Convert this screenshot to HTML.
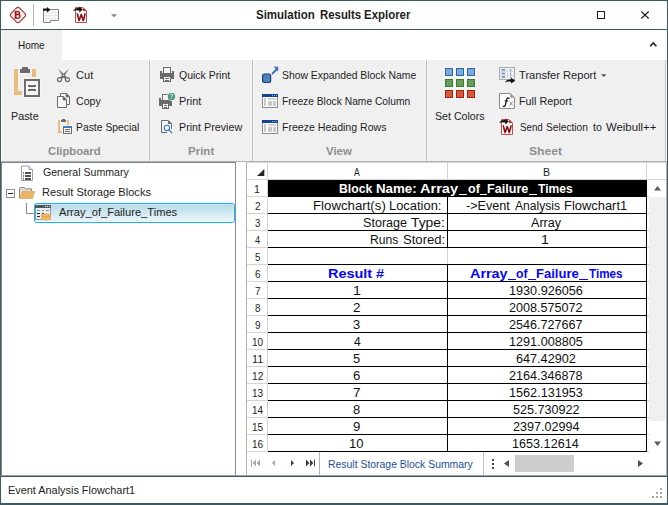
<!DOCTYPE html>
<html><head><meta charset="utf-8">
<style>
*{box-sizing:border-box;margin:0;padding:0}
html,body{width:668px;height:505px;overflow:hidden;background:#fff}
body{font-family:"Liberation Sans",sans-serif;position:relative}
.a{position:absolute}
.t{position:absolute;white-space:nowrap;line-height:14px;transform-origin:0 50%;display:block}
svg{position:absolute;overflow:visible}
</style></head><body>
<div class="a" style="left:0px;top:0px;width:668px;height:505px;background:#fff;"></div>
<span class="t" style="left:256.47px;top:8.14px;font-size:12px;font-weight:bold;color:#1e1e1e;transform:scaleX(0.9577)">Simulation</span>
<span class="t" style="left:319.64px;top:8.14px;font-size:12px;font-weight:bold;color:#1e1e1e;transform:scaleX(0.9486)">Results</span>
<span class="t" style="left:364.14px;top:8.14px;font-size:12px;font-weight:bold;color:#1e1e1e;transform:scaleX(0.9535)">Explorer</span>
<div class="a" style="left:0px;top:29px;width:668px;height:1px;background:#3d5a5e;"></div>
<div class="a" style="left:2px;top:30px;width:60px;height:30px;background:#f0f0f0;"></div>
<span class="t" style="left:17.79px;top:38.19px;font-size:11px;color:#1a1a1a;transform:scaleX(0.9082)">Home</span>
<div class="a" style="left:1px;top:60px;width:666px;height:101px;background:#fafafa;"></div>
<div class="a" style="left:2px;top:60px;width:663px;height:101px;background:#f0f0f0;"></div>
<div class="a" style="left:665px;top:60px;width:1px;height:101px;background:#c6c6c6;"></div>
<div class="a" style="left:148px;top:60px;width:3px;height:101px;background:#f5f5f5;"></div>
<div class="a" style="left:149px;top:60px;width:1px;height:101px;background:#bdbdbd;"></div>
<div class="a" style="left:251px;top:60px;width:3px;height:101px;background:#f5f5f5;"></div>
<div class="a" style="left:252px;top:60px;width:1px;height:101px;background:#bdbdbd;"></div>
<div class="a" style="left:425px;top:60px;width:3px;height:101px;background:#f5f5f5;"></div>
<div class="a" style="left:426px;top:60px;width:1px;height:101px;background:#bdbdbd;"></div>
<div class="a" style="left:1px;top:161px;width:666px;height:1px;background:#b2b2b2;"></div>
<span class="t" style="left:10.72px;top:108.79px;font-size:11px;color:#1e1e1e;transform:scaleX(0.9826)">Paste</span>
<span class="t" style="left:76.15px;top:68.39px;font-size:11px;color:#1e1e1e;transform:scaleX(1.0061)">Cut</span>
<span class="t" style="left:76.17px;top:94.39px;font-size:11px;color:#1e1e1e;transform:scaleX(0.9638)">Copy</span>
<span class="t" style="left:76.26px;top:120.19px;font-size:11px;color:#1e1e1e;transform:scaleX(0.9430)">Paste Special</span>
<span class="t" style="left:179.11px;top:68.39px;font-size:11px;color:#1e1e1e;transform:scaleX(0.9511)">Quick Print</span>
<span class="t" style="left:179.12px;top:94.39px;font-size:11px;color:#1e1e1e;transform:scaleX(0.9882)">Print</span>
<span class="t" style="left:179.13px;top:120.19px;font-size:11px;color:#1e1e1e;transform:scaleX(0.9757)">Print Preview</span>
<span class="t" style="left:282.43px;top:68.39px;font-size:11px;color:#1e1e1e;transform:scaleX(0.9422)">Show Expanded Block Name</span>
<span class="t" style="left:282.07px;top:94.39px;font-size:11px;color:#1e1e1e;transform:scaleX(0.9327)">Freeze Block Name Column</span>
<span class="t" style="left:282.05px;top:120.19px;font-size:11px;color:#1e1e1e;transform:scaleX(0.9596)">Freeze Heading Rows</span>
<span class="t" style="left:435.42px;top:108.79px;font-size:11px;color:#1e1e1e;transform:scaleX(0.9650)">Set Colors</span>
<span class="t" style="left:519.26px;top:68.39px;font-size:11px;color:#1e1e1e;transform:scaleX(1.0103)">Transfer Report</span>
<span class="t" style="left:519.03px;top:94.39px;font-size:11px;color:#1e1e1e;transform:scaleX(0.9824)">Full Report</span>
<span class="t" style="left:519.86px;top:120.19px;font-size:11px;color:#1e1e1e;transform:scaleX(0.8857)">Send</span>
<span class="t" style="left:546.34px;top:120.19px;font-size:11px;color:#1e1e1e;transform:scaleX(0.9263)">Selection</span>
<span class="t" style="left:592.75px;top:120.19px;font-size:11px;color:#1e1e1e;transform:scaleX(0.9577)">to</span>
<span class="t" style="left:605.85px;top:120.19px;font-size:11px;color:#1e1e1e;transform:scaleX(1.0324)">Weibull++</span>
<span class="t" style="left:48.25px;top:143.59px;font-size:11px;font-weight:bold;color:#8e8e8e;transform:scaleX(1.0245)">Clipboard</span>
<span class="t" style="left:187.73px;top:143.59px;font-size:11px;font-weight:bold;color:#8e8e8e;transform:scaleX(1.0460)">Print</span>
<span class="t" style="left:325.54px;top:143.59px;font-size:11px;font-weight:bold;color:#8e8e8e;transform:scaleX(1.0391)">View</span>
<span class="t" style="left:528.85px;top:143.59px;font-size:11px;font-weight:bold;color:#8e8e8e;transform:scaleX(1.1045)">Sheet</span>
<div class="a" style="left:1px;top:162px;width:235px;height:314px;background:#fff;border:1px solid #858a94;border-top-color:#7c848e"></div>
<div class="a" style="left:236px;top:162px;width:10px;height:314px;background:#fff;"></div>
<div class="a" style="left:246px;top:162px;width:421px;height:314px;background:#fff;border:1px solid #b4b4b4;border-top-color:#d6d6d6"></div>
<span class="t" style="left:42.57px;top:165.19px;font-size:11px;color:#1e1e1e;transform:scaleX(0.9607)">General Summary</span>
<span class="t" style="left:42.00px;top:185.19px;font-size:11px;color:#1e1e1e;transform:scaleX(1.0071)">Result Storage Blocks</span>
<div class="a" style="left:34px;top:203px;width:201px;height:20px;background:linear-gradient(#b4dae8,#ecf6fa);border:1px solid #1ab2f6;border-radius:2.5px;box-shadow:inset 0 0 0 1px rgba(255,255,255,0.35)"></div>
<span class="t" style="left:58.88px;top:205.19px;font-size:11px;color:#1e1e1e;transform:scaleX(1.0098)">Array_of_Failure_Times</span>
<div class="a" style="left:0px;top:475px;width:668px;height:1px;background:#9aa4a8;"></div>
<div class="a" style="left:0px;top:476px;width:668px;height:1px;background:#3d5a5e;"></div>
<div class="a" style="left:1px;top:477px;width:666px;height:26px;background:#fff;"></div>
<span class="t" style="left:8.02px;top:483.19px;font-size:11px;color:#1e1e1e;transform:scaleX(0.9900)">Event Analysis Flowchart1</span>
<div class="a" style="left:247px;top:179px;width:419px;height:1px;background:#d4d4d4;"></div>
<div class="a" style="left:267px;top:163px;width:1px;height:289px;background:#d4d4d4;"></div>
<div class="a" style="left:447px;top:163px;width:1px;height:17px;background:#d4d4d4;"></div>
<div class="a" style="left:646px;top:163px;width:1px;height:17px;background:#d4d4d4;"></div>
<span class="t" style="left:354.39px;top:165.39px;font-size:11px;color:#1e1e1e;transform:scaleX(0.7795)">A</span>
<span class="t" style="left:542.54px;top:165.39px;font-size:11px;color:#1e1e1e;transform:scaleX(0.9702)">B</span>
<div class="a" style="left:247px;top:196px;width:21px;height:1px;background:#d4d4d4;"></div>
<span class="t" style="left:254.40px;top:181.99px;font-size:11px;color:#1e1e1e;transform:scaleX(0.9652)">1</span>
<div class="a" style="left:247px;top:213px;width:21px;height:1px;background:#d4d4d4;"></div>
<span class="t" style="left:254.70px;top:198.99px;font-size:11px;color:#1e1e1e;transform:scaleX(0.9143)">2</span>
<div class="a" style="left:247px;top:230px;width:21px;height:1px;background:#d4d4d4;"></div>
<span class="t" style="left:254.84px;top:215.99px;font-size:11px;color:#1e1e1e;transform:scaleX(0.8788)">3</span>
<div class="a" style="left:247px;top:247px;width:21px;height:1px;background:#d4d4d4;"></div>
<span class="t" style="left:254.99px;top:232.99px;font-size:11px;color:#1e1e1e;transform:scaleX(0.8293)">4</span>
<div class="a" style="left:247px;top:264px;width:21px;height:1px;background:#d4d4d4;"></div>
<span class="t" style="left:254.81px;top:249.99px;font-size:11px;color:#1e1e1e;transform:scaleX(0.8814)">5</span>
<div class="a" style="left:247px;top:281px;width:21px;height:1px;background:#d4d4d4;"></div>
<span class="t" style="left:254.71px;top:266.99px;font-size:11px;color:#1e1e1e;transform:scaleX(0.9031)">6</span>
<div class="a" style="left:247px;top:298px;width:21px;height:1px;background:#d4d4d4;"></div>
<span class="t" style="left:254.68px;top:283.99px;font-size:11px;color:#1e1e1e;transform:scaleX(0.9171)">7</span>
<div class="a" style="left:247px;top:315px;width:21px;height:1px;background:#d4d4d4;"></div>
<span class="t" style="left:254.78px;top:300.99px;font-size:11px;color:#1e1e1e;transform:scaleX(0.8894)">8</span>
<div class="a" style="left:247px;top:332px;width:21px;height:1px;background:#d4d4d4;"></div>
<span class="t" style="left:254.73px;top:317.99px;font-size:11px;color:#1e1e1e;transform:scaleX(0.9031)">9</span>
<div class="a" style="left:247px;top:349px;width:21px;height:1px;background:#d4d4d4;"></div>
<span class="t" style="left:251.75px;top:334.99px;font-size:11px;color:#1e1e1e;transform:scaleX(0.9091)">10</span>
<div class="a" style="left:247px;top:366px;width:21px;height:1px;background:#d4d4d4;"></div>
<span class="t" style="left:251.68px;top:351.99px;font-size:11px;color:#1e1e1e;transform:scaleX(0.9938)">11</span>
<div class="a" style="left:247px;top:383px;width:21px;height:1px;background:#d4d4d4;"></div>
<span class="t" style="left:251.74px;top:368.99px;font-size:11px;color:#1e1e1e;transform:scaleX(0.9195)">12</span>
<div class="a" style="left:247px;top:400px;width:21px;height:1px;background:#d4d4d4;"></div>
<span class="t" style="left:251.74px;top:385.99px;font-size:11px;color:#1e1e1e;transform:scaleX(0.9143)">13</span>
<div class="a" style="left:247px;top:417px;width:21px;height:1px;background:#d4d4d4;"></div>
<span class="t" style="left:251.75px;top:402.99px;font-size:11px;color:#1e1e1e;transform:scaleX(0.9014)">14</span>
<div class="a" style="left:247px;top:434px;width:21px;height:1px;background:#d4d4d4;"></div>
<span class="t" style="left:251.74px;top:419.99px;font-size:11px;color:#1e1e1e;transform:scaleX(0.9130)">15</span>
<div class="a" style="left:247px;top:451px;width:21px;height:1px;background:#d4d4d4;"></div>
<span class="t" style="left:251.74px;top:436.99px;font-size:11px;color:#1e1e1e;transform:scaleX(0.9143)">16</span>
<div class="a" style="left:268px;top:180px;width:379px;height:17px;background:#000;"></div>
<span class="t" style="left:338.59px;top:181.97px;font-size:12.5px;font-weight:bold;color:#fff;transform:scaleX(0.9749)">Block</span>
<span class="t" style="left:375.52px;top:181.97px;font-size:12.5px;font-weight:bold;color:#fff;transform:scaleX(1.0639)">Name:</span>
<span class="t" style="left:420.35px;top:181.97px;font-size:12.5px;font-weight:bold;color:#fff;transform:scaleX(1.1642)">Array</span>
<span class="t" style="left:467.61px;top:181.97px;font-size:12.5px;font-weight:bold;color:#fff;transform:scaleX(1.0050)">of</span>
<span class="t" style="left:487.46px;top:181.97px;font-size:12.5px;font-weight:bold;color:#fff;transform:scaleX(1.0092)">Failure</span>
<span class="t" style="left:538.08px;top:181.97px;font-size:12.5px;font-weight:bold;color:#fff;transform:scaleX(0.9637)">Times</span>
<div class="a" style="left:459.2px;top:193.7px;width:8.0px;height:1.5px;background:#fff;"></div>
<div class="a" style="left:479.9px;top:193.7px;width:7.5px;height:1.5px;background:#fff;"></div>
<div class="a" style="left:528.8px;top:193.7px;width:8.5px;height:1.5px;background:#fff;"></div>
<div class="a" style="left:268px;top:213px;width:379px;height:1px;background:#000;"></div>
<div class="a" style="left:268px;top:230px;width:379px;height:1px;background:#000;"></div>
<div class="a" style="left:268px;top:247px;width:379px;height:1px;background:#000;"></div>
<div class="a" style="left:268px;top:264px;width:379px;height:1px;background:#000;"></div>
<div class="a" style="left:268px;top:281px;width:379px;height:1px;background:#000;"></div>
<div class="a" style="left:268px;top:298px;width:379px;height:1px;background:#000;"></div>
<div class="a" style="left:268px;top:315px;width:379px;height:1px;background:#000;"></div>
<div class="a" style="left:268px;top:332px;width:379px;height:1px;background:#000;"></div>
<div class="a" style="left:268px;top:349px;width:379px;height:1px;background:#000;"></div>
<div class="a" style="left:268px;top:366px;width:379px;height:1px;background:#000;"></div>
<div class="a" style="left:268px;top:383px;width:379px;height:1px;background:#000;"></div>
<div class="a" style="left:268px;top:400px;width:379px;height:1px;background:#000;"></div>
<div class="a" style="left:268px;top:417px;width:379px;height:1px;background:#000;"></div>
<div class="a" style="left:268px;top:434px;width:379px;height:1px;background:#000;"></div>
<div class="a" style="left:268px;top:451px;width:379px;height:1px;background:#000;"></div>
<div class="a" style="left:447px;top:197px;width:1px;height:51px;background:#000;"></div>
<div class="a" style="left:447px;top:264px;width:1px;height:188px;background:#000;"></div>
<div class="a" style="left:447px;top:248px;width:1px;height:16px;background:#d4d4d4;"></div>
<div class="a" style="left:646px;top:180px;width:1px;height:272px;background:#000;"></div>
<span class="t" style="left:313.22px;top:198.97px;font-size:12.5px;color:#111;transform:scaleX(1.0587)">Flowchart(s)</span>
<span class="t" style="left:389.05px;top:198.97px;font-size:12.5px;color:#111;transform:scaleX(1.0331)">Location:</span>
<span class="t" style="left:363.23px;top:215.97px;font-size:12.5px;color:#111;transform:scaleX(1.0077)">Storage</span>
<span class="t" style="left:411.31px;top:215.97px;font-size:12.5px;color:#111;transform:scaleX(1.1072)">Type:</span>
<span class="t" style="left:370.22px;top:232.97px;font-size:12.5px;color:#111;transform:scaleX(0.9663)">Runs</span>
<span class="t" style="left:402.91px;top:232.97px;font-size:12.5px;color:#111;transform:scaleX(1.0464)">Stored:</span>
<span class="t" style="left:465.65px;top:198.97px;font-size:12.5px;color:#111;transform:scaleX(1.0094)">-&gt;Event</span>
<span class="t" style="left:514.58px;top:198.97px;font-size:12.5px;color:#111;transform:scaleX(0.9676)">Analysis</span>
<span class="t" style="left:563.65px;top:198.97px;font-size:12.5px;color:#111;transform:scaleX(1.0333)">Flowchart1</span>
<span class="t" style="left:530.78px;top:215.97px;font-size:12.5px;color:#111;transform:scaleX(1.0058)">Array</span>
<span class="t" style="left:541.39px;top:232.97px;font-size:12.5px;color:#111;transform:scaleX(1.1283)">1</span>
<span class="t" style="left:328.45px;top:266.97px;font-size:12.5px;font-weight:bold;color:#0505ff;transform:scaleX(1.1510)">Result #</span>
<span class="t" style="left:469.56px;top:266.97px;font-size:12.5px;font-weight:bold;color:#0505ff;transform:scaleX(1.1518)">Array</span>
<span class="t" style="left:516.13px;top:266.97px;font-size:12.5px;font-weight:bold;color:#0505ff;transform:scaleX(0.9785)">of</span>
<span class="t" style="left:536.14px;top:266.97px;font-size:12.5px;font-weight:bold;color:#0505ff;transform:scaleX(1.0419)">Failure</span>
<span class="t" style="left:588.58px;top:266.97px;font-size:12.5px;font-weight:bold;color:#0505ff;transform:scaleX(0.9325)">Times</span>
<div class="a" style="left:507.7px;top:278.7px;width:8.099999999999966px;height:1.5px;background:#0505ff;"></div>
<div class="a" style="left:528.2px;top:278.7px;width:8.0px;height:1.5px;background:#0505ff;"></div>
<div class="a" style="left:578.9px;top:278.7px;width:9.0px;height:1.5px;background:#0505ff;"></div>
<span class="t" style="left:508.88px;top:283.97px;font-size:12.5px;color:#111;transform:scaleX(1.0117)">1930.926056</span>
<span class="t" style="left:352.87px;top:283.97px;font-size:12.5px;color:#111;transform:scaleX(1.1339)">1</span>
<span class="t" style="left:509.19px;top:300.97px;font-size:12.5px;color:#111;transform:scaleX(1.0084)">2008.575072</span>
<span class="t" style="left:353.26px;top:300.97px;font-size:12.5px;color:#111;transform:scaleX(1.0748)">2</span>
<span class="t" style="left:509.19px;top:317.97px;font-size:12.5px;color:#111;transform:scaleX(1.0084)">2546.727667</span>
<span class="t" style="left:353.45px;top:317.97px;font-size:12.5px;color:#111;transform:scaleX(1.0324)">3</span>
<span class="t" style="left:508.88px;top:334.97px;font-size:12.5px;color:#111;transform:scaleX(1.0112)">1291.008805</span>
<span class="t" style="left:353.66px;top:334.97px;font-size:12.5px;color:#111;transform:scaleX(0.9711)">4</span>
<span class="t" style="left:516.12px;top:351.97px;font-size:12.5px;color:#111;transform:scaleX(1.0112)">647.42902</span>
<span class="t" style="left:353.42px;top:351.97px;font-size:12.5px;color:#111;transform:scaleX(1.0324)">5</span>
<span class="t" style="left:509.20px;top:368.97px;font-size:12.5px;color:#111;transform:scaleX(1.0070)">2164.346878</span>
<span class="t" style="left:353.27px;top:368.97px;font-size:12.5px;color:#111;transform:scaleX(1.0603)">6</span>
<span class="t" style="left:508.88px;top:385.97px;font-size:12.5px;color:#111;transform:scaleX(1.0117)">1562.131953</span>
<span class="t" style="left:353.24px;top:385.97px;font-size:12.5px;color:#111;transform:scaleX(1.0778)">7</span>
<span class="t" style="left:512.79px;top:402.97px;font-size:12.5px;color:#111;transform:scaleX(1.0077)">525.730922</span>
<span class="t" style="left:353.38px;top:402.97px;font-size:12.5px;color:#111;transform:scaleX(1.0406)">8</span>
<span class="t" style="left:512.66px;top:419.97px;font-size:12.5px;color:#111;transform:scaleX(1.0055)">2397.02994</span>
<span class="t" style="left:353.32px;top:419.97px;font-size:12.5px;color:#111;transform:scaleX(1.0575)">9</span>
<span class="t" style="left:512.34px;top:436.97px;font-size:12.5px;color:#111;transform:scaleX(1.0103)">1653.12614</span>
<span class="t" style="left:349.49px;top:436.97px;font-size:12.5px;color:#111;transform:scaleX(1.0461)">10</span>
<div class="a" style="left:649px;top:197px;width:17px;height:224px;background:#f0f0f0;"></div>
<svg style="left:653px;top:185px" width="9" height="6"><path d="M1 5.4 L4.5 1 L8 5.4 Z" fill="#5a5a5a"/></svg>
<svg style="left:653px;top:441px" width="9" height="6"><path d="M1 0.5 L4.5 5 L8 0.5 Z" fill="#5a5a5a"/></svg>
<div class="a" style="left:647px;top:196px;width:2px;height:1px;background:#cfcfcf;"></div>
<div class="a" style="left:647px;top:213px;width:2px;height:1px;background:#cfcfcf;"></div>
<div class="a" style="left:647px;top:230px;width:2px;height:1px;background:#cfcfcf;"></div>
<div class="a" style="left:647px;top:247px;width:2px;height:1px;background:#cfcfcf;"></div>
<div class="a" style="left:647px;top:264px;width:2px;height:1px;background:#cfcfcf;"></div>
<div class="a" style="left:647px;top:281px;width:2px;height:1px;background:#cfcfcf;"></div>
<div class="a" style="left:647px;top:298px;width:2px;height:1px;background:#cfcfcf;"></div>
<div class="a" style="left:647px;top:315px;width:2px;height:1px;background:#cfcfcf;"></div>
<div class="a" style="left:647px;top:332px;width:2px;height:1px;background:#cfcfcf;"></div>
<div class="a" style="left:647px;top:349px;width:2px;height:1px;background:#cfcfcf;"></div>
<div class="a" style="left:647px;top:366px;width:2px;height:1px;background:#cfcfcf;"></div>
<div class="a" style="left:647px;top:383px;width:2px;height:1px;background:#cfcfcf;"></div>
<div class="a" style="left:647px;top:400px;width:2px;height:1px;background:#cfcfcf;"></div>
<div class="a" style="left:647px;top:417px;width:2px;height:1px;background:#cfcfcf;"></div>
<div class="a" style="left:647px;top:434px;width:2px;height:1px;background:#cfcfcf;"></div>
<div class="a" style="left:647px;top:451px;width:2px;height:1px;background:#cfcfcf;"></div>
<div class="a" style="left:247px;top:452px;width:419px;height:23px;background:#fff;"></div>
<div class="a" style="left:319px;top:452px;width:1px;height:23px;background:#b2b2b2;"></div>
<div class="a" style="left:483px;top:452px;width:1px;height:23px;background:#c4c4c4;"></div>
<span class="t" style="left:328.06px;top:456.89px;font-size:11px;color:#1f4e9a;transform:scaleX(0.9472)">Result Storage Block Summary</span>
<div class="a" style="left:515px;top:455px;width:59px;height:17px;background:#cdcdcd;"></div>
<svg style="left:503px;top:459px" width="7" height="9"><path d="M6 1 L1 4.5 L6 8 Z" fill="#505050"/></svg>
<svg style="left:637px;top:459px" width="7" height="9"><path d="M1 1 L6 4.5 L1 8 Z" fill="#505050"/></svg>
<div class="a" style="left:492px;top:459px;width:2px;height:2px;background:#444;"></div>
<div class="a" style="left:492px;top:463px;width:2px;height:2px;background:#444;"></div>
<div class="a" style="left:492px;top:467px;width:2px;height:2px;background:#444;"></div>
<svg style="left:250px;top:459px" width="70" height="8"><g fill="#a6a6a6"><rect x="1" y="0.5" width="1" height="7"/><path d="M6 0.5 L2.6 4 L6 7.5Z"/><path d="M10 0.5 L6.6 4 L10 7.5Z"/><path d="M25 1 L22 4 L25 7Z"/></g><g fill="#3c3c3c"><path d="M41 1 L44 4 L41 7Z"/><path d="M56 0.5 L59.4 4 L56 7.5Z"/><path d="M60 0.5 L63.4 4 L60 7.5Z"/><rect x="64" y="0.5" width="1" height="7"/></g></svg>
<div class="a" style="left:660px;top:488px;width:2px;height:2px;background:#a8a8a8;"></div>
<div class="a" style="left:656px;top:492px;width:2px;height:2px;background:#a8a8a8;"></div>
<div class="a" style="left:660px;top:492px;width:2px;height:2px;background:#a8a8a8;"></div>
<div class="a" style="left:652px;top:496px;width:2px;height:2px;background:#a8a8a8;"></div>
<div class="a" style="left:656px;top:496px;width:2px;height:2px;background:#a8a8a8;"></div>
<div class="a" style="left:660px;top:496px;width:2px;height:2px;background:#a8a8a8;"></div>
<svg style="left:256px;top:169px" width="9" height="8"><path d="M8.3 0 L8.3 7 L1 7 Z" fill="#262626"/></svg>
<svg style="left:596px;top:10px" width="60" height="10" shape-rendering="crispEdges"><rect x="1.5" y="1.5" width="7" height="7" fill="none" stroke="#1a1a1a"/></svg>
<svg style="left:640px;top:10px" width="10" height="10"><path d="M1.3 1.5 L8.7 8.5 M8.7 1.5 L1.3 8.5" stroke="#1a1a1a" stroke-width="1.1" fill="none"/></svg>
<svg style="left:649px;top:41px" width="9" height="6"><path d="M1.2 5.2 L4.3 2 L7.4 5.2" stroke="#222" stroke-width="1.6" fill="none"/></svg>
<svg style="left:0;top:0" width="668" height="505" viewBox="0 0 668 505"><g shape-rendering="crispEdges">
<rect x="19" y="66" width="12" height="8" fill="#f6f6f6"/>
<rect x="23" y="78" width="18" height="20" fill="#f6f6f6"/>
<path d="M14 69H18V91H22V95H14Z" fill="#e9bd7b"/>
<rect x="32" y="69" width="4" height="8" fill="#e9bd7b"/>
<rect x="20" y="69" width="10" height="4" fill="#6b6b6b"/>
<rect x="22" y="67" width="6" height="2" fill="#6b6b6b"/>
<rect x="25" y="80" width="14" height="16" fill="#f6f6f6" stroke="#6b6b6b" stroke-width="2"/>
<rect x="28" y="85" width="8" height="2" fill="#6b6b6b"/>
<rect x="28" y="89" width="8" height="2" fill="#6b6b6b"/>
</g>
<g fill="#6b6b6b" stroke="none">
<path d="M58 68.6L66.9 77.3L64.3 78.7Z"/>
<path d="M69 68.6L60.1 77.3L62.7 78.7Z"/>
</g>
<circle cx="59.5" cy="79.6" r="2" fill="none" stroke="#6b6b6b" stroke-width="1.2"/>
<circle cx="67.5" cy="79.6" r="2" fill="none" stroke="#6b6b6b" stroke-width="1.2"/>
<circle cx="63.5" cy="75.4" r="0.6" fill="#ddd"/>
<path d="M60.5 93.5H66.5L69.5 96.5V104.5H60.5Z" fill="#f7f7f7" stroke="#6b6b6b"/>
<path d="M66 93.5V97H69.5Z" fill="#6b6b6b" stroke="#6b6b6b" stroke-width="0.6"/>
<path d="M57.5 96.5H63.5L66.5 99.5V107.5H57.5Z" fill="#f7f7f7" stroke="#6b6b6b"/>
<path d="M63 96.5V100H66.5Z" fill="#6b6b6b" stroke="#6b6b6b" stroke-width="0.6"/>
<g shape-rendering="crispEdges">
<path d="M58 120H60V131H62V133H58Z" fill="#e9bd7b"/>
<rect x="67" y="120" width="2" height="5" fill="#e9bd7b"/>
<rect x="61" y="120" width="5" height="2" fill="#6b6b6b"/>
<rect x="62" y="119" width="3" height="1" fill="#6b6b6b"/>
<rect x="62" y="125" width="11" height="10" fill="#f6f6f6"/>
<rect x="63.5" y="127" width="8" height="6.5" fill="#fff" stroke="#6b6b6b"/>
<rect x="63" y="126" width="9" height="2" fill="#3a7cc0"/>
<rect x="65" y="129" width="5" height="1" fill="#6b6b6b"/>
<rect x="65" y="131" width="5" height="1" fill="#6b6b6b"/>
</g>
<g shape-rendering="crispEdges">
<rect x="163.5" y="67.5" width="7" height="6" fill="#f6f6f6" stroke="#6b6b6b"/>
<path d="M160 71H162V73H172V71H174V79H160Z" fill="#6b6b6b"/>
<rect x="163.5" y="76.5" width="7" height="5" fill="#f6f6f6" stroke="#6b6b6b"/>
<rect x="165" y="77.5" width="4" height="1" fill="#6b6b6b"/>
<rect x="165" y="79.5" width="4" height="1" fill="#6b6b6b"/>
</g>
<g shape-rendering="crispEdges">
<rect x="162.5" y="94.5" width="6" height="6" fill="#f6f6f6" stroke="#6b6b6b"/>
<path d="M159 98H161V100H170V98H172V106H159Z" fill="#6b6b6b"/>
<rect x="162.5" y="103.5" width="6" height="5" fill="#f6f6f6" stroke="#6b6b6b"/>
<rect x="164" y="104.5" width="3" height="1" fill="#6b6b6b"/>
<rect x="164" y="106.5" width="3" height="1" fill="#6b6b6b"/>
</g>
<circle cx="171.5" cy="96.4" r="4.3" fill="#f4f4f4"/>
<circle cx="171.5" cy="96.4" r="3.7" fill="#4a9c7e"/>
<path d="M170.3 95.2Q170.4 94.1 171.5 94.1Q172.7 94.1 172.7 95.1Q172.7 95.8 171.6 96.4V97.2" fill="none" stroke="#fff" stroke-width="0.9"/>
<circle cx="171.6" cy="98.5" r="0.55" fill="#fff"/>
<path d="M161.5 120.5H168.5L171.5 123.5V132.5H161.5Z" fill="#f6f6f6" stroke="#6b6b6b"/>
<path d="M168 120.5V124H171.5Z" fill="#6b6b6b"/>
<rect x="167" y="129" width="6" height="5" fill="#f6f6f6"/>
<circle cx="166.9" cy="127.9" r="2.7" fill="#f4f8fc" stroke="#3d7cc4" stroke-width="1.1"/>
<path d="M168.9 129.9L171.8 132.8" stroke="#3d7cc4" stroke-width="1.3" stroke-linecap="round"/>
<rect x="262.6" y="74" width="8.1" height="8.5" rx="1.8" fill="#4f81bd" stroke="#12357a" stroke-width="1.1"/>
<path d="M272 74L277 69" stroke="#3d72b4" stroke-width="2"/>
<path d="M273.6 66.8H278.2V71.4Z" fill="#3d72b4"/>
<g shape-rendering="crispEdges">
<rect x="262.5" y="94.5" width="15" height="13" fill="#fff" stroke="#8c8c8c"/>
<rect x="262" y="94" width="16" height="3" fill="#0e4595"/>
<rect x="272" y="95" width="1" height="1" fill="#9db6d8"/><rect x="274" y="95" width="1" height="1" fill="#9db6d8"/><rect x="276" y="95" width="1" height="1" fill="#9db6d8"/>
<rect x="264" y="98" width="2" height="8" fill="#c9c9c9"/>
<rect x="268" y="98" width="8" height="2" fill="#d4d4d4"/>
<rect x="268" y="101" width="4" height="5" fill="#c9c9c9"/>
<rect x="273" y="101" width="3" height="5" fill="#c9c9c9"/>
</g>
<g shape-rendering="crispEdges">
<rect x="262.5" y="120.5" width="15" height="13" fill="#fff" stroke="#8c8c8c"/>
<rect x="262" y="120" width="16" height="3" fill="#0e4595"/>
<rect x="272" y="121" width="1" height="1" fill="#9db6d8"/><rect x="274" y="121" width="1" height="1" fill="#9db6d8"/><rect x="276" y="121" width="1" height="1" fill="#9db6d8"/>
<rect x="264" y="124" width="2" height="8" fill="#c9c9c9"/>
<rect x="268" y="124" width="8" height="2" fill="#d4d4d4"/>
<rect x="268" y="127" width="4" height="5" fill="#c9c9c9"/>
<rect x="273" y="127" width="3" height="5" fill="#c9c9c9"/>
</g>
<g shape-rendering="crispEdges">
<rect x="444" y="67" width="32" height="32" fill="#f7f7f7"/>
<rect x="445.5" y="68.5" width="7" height="7" fill="#79aad9" stroke="#2d66ab"/>
<rect x="456.5" y="68.5" width="7" height="7" fill="#79aad9" stroke="#2d66ab"/>
<rect x="467.5" y="68.5" width="7" height="7" fill="#79aad9" stroke="#2d66ab"/>
<rect x="445.5" y="79.5" width="7" height="7" fill="#6a9b59" stroke="#33802d"/>
<rect x="456.5" y="79.5" width="7" height="7" fill="#6a9b59" stroke="#33802d"/>
<rect x="467.5" y="79.5" width="7" height="7" fill="#6a9b59" stroke="#33802d"/>
<rect x="445.5" y="90.5" width="7" height="7" fill="#d85a39" stroke="#a81f12"/>
<rect x="456.5" y="90.5" width="7" height="7" fill="#d85a39" stroke="#a81f12"/>
<rect x="467.5" y="90.5" width="7" height="7" fill="#d85a39" stroke="#a81f12"/>
</g>
<g shape-rendering="crispEdges">
<rect x="499.5" y="67.5" width="15" height="11.5" fill="#f2f2f2" stroke="#a9a9a9"/>
<path d="M500 71.5H514M500 75.5H514M507.5 68V78" stroke="#dcdcdc"/>
</g>
<g fill="#5d8cc6">
<rect x="501.5" y="69" width="3.6" height="1.8" opacity="0.85"/>
<rect x="510.2" y="69" width="1" height="2.2"/>
<rect x="501.5" y="72.6" width="3.6" height="1.8" opacity="0.85"/>
<rect x="510.2" y="72.6" width="1" height="2.2"/>
<rect x="501.5" y="76.2" width="3.6" height="1.8" opacity="0.85"/>
<rect x="510.2" y="76.2" width="1" height="2.2"/>
</g>
<path d="M505 82.4Q506.4 79.2 511 79.4V77.8L515.3 80.8L511 83.6V81.8Q507.6 81 505 82.4Z" fill="#111"/>
<path d="M499.5 93.5H510.5L514.5 97.5V108.5H499.5Z" fill="#fff" stroke="#8c8c8c"/>
<path d="M510.5 93.5V97.5H514.5Z" fill="#9c9c9c" stroke="#9c9c9c" stroke-width="0.7"/>
<path d="M509 98.4Q507.3 97 506.7 99.4L505.3 105.2Q504.9 106.9 503.2 106.3" fill="none" stroke="#1a1a1a" stroke-width="1.3" stroke-linecap="round"/>
<path d="M504.6 100.9H508.2" stroke="#1a1a1a" stroke-width="1"/>
<path d="M509.6 101.6L512.8 105.6M512.8 101.6L509.6 105.6" stroke="#777" stroke-width="0.9"/>
<g transform="translate(0,0)">
<path d="M501.5 119.5H509L512.5 123V134.5H501.5Z" fill="#f1f5f8" stroke="#c4504c"/>
<path d="M509 119.5V123H512.5Z" fill="#c92a20"/>
<path d="M503.2 125.4L505.1 132.6L507.2 126.6L509.3 132.6L511.2 125.4" fill="none" stroke="#8e0c0c" stroke-width="1.6" stroke-linejoin="round"/>
<path d="M499 123.3Q500.8 119.3 505.3 120V118.4L508.8 121.4L505.3 124.4V122.6Q501.8 121.6 499 123.3Z" fill="#111"/>
</g>
<g transform="translate(-426,-112)">
<path d="M501.5 119.5H509L512.5 123V134.5H501.5Z" fill="#f1f5f8" stroke="#c4504c"/>
<path d="M509 119.5V123H512.5Z" fill="#c92a20"/>
<path d="M503.2 125.4L505.1 132.6L507.2 126.6L509.3 132.6L511.2 125.4" fill="none" stroke="#8e0c0c" stroke-width="1.6" stroke-linejoin="round"/>
<path d="M499 123.3Q500.8 119.3 505.3 120V118.4L508.8 121.4L505.3 124.4V122.6Q501.8 121.6 499 123.3Z" fill="#111"/>
</g>
<path d="M111 14.2H117L114 17.2Z" fill="#808080"/>
<path d="M601 74.2H606.4L603.7 77Z" fill="#555"/>
<rect x="12" y="9" width="12" height="12" rx="2.3" transform="rotate(45 18 15)" fill="#eef2f6" stroke="#b22c2c" stroke-width="1.1"/>
<path d="M15.6 11V18.8" stroke="#9c0e0e" stroke-width="1.7"/>
<path d="M16 11.6H18.1Q19.5 11.6 19.5 13Q19.5 14.5 18.1 14.5H16M18.1 14.5H18.4Q20 14.5 20 16.3Q20 18.1 18.4 18.1H16" fill="none" stroke="#9c0e0e" stroke-width="1.35"/>
<rect x="33" y="4" width="1" height="22" fill="#b4b4b4"/>
<path d="M43.5 9.5H58.5V20.5H50.5V22.5H43.5Z" fill="#fff" stroke="#868686"/>
<path d="M46.5 10V22M49.5 10V22M52.5 10V20M55.5 10V20M44 12.5H58M44 15.5H58M44 18.5H58" stroke="#e9e9e9" stroke-width="1"/>
<path d="M43 8.6H47V7L50.6 9.7L47 12.4V10.8H43Z" fill="#111"/>
<path d="M21.5 166H29L32.5 169.5V180.5H21.5Z" fill="#fff" stroke="#a2a2a2"/>
<path d="M29 166V169.5H32.5" fill="#e6e6e6" stroke="#a2a2a2"/>
<g shape-rendering="crispEdges" fill="#555">
<rect x="25" y="172" width="6" height="1.6"/>
<rect x="23" y="172" width="1" height="1.6" fill="#777"/>
<rect x="25" y="175" width="6" height="1.6"/>
<rect x="23" y="175" width="1" height="1.6" fill="#777"/>
<rect x="25" y="178" width="6" height="1.6"/>
<rect x="23" y="178" width="1" height="1.6" fill="#777"/>
</g>
<g shape-rendering="crispEdges"><rect x="6.5" y="189.5" width="8" height="8" rx="1" fill="#fff" stroke="#8f8f8f"/><rect x="8" y="193" width="5" height="1" fill="#222"/></g>
<path d="M19.5 198V188.5Q19.5 187.5 20.5 187.5H24.5L25.5 188.8H31.5V191" fill="#dcdcdc" stroke="#8a8a8a"/>
<path d="M22 191H35.4L32.6 199H19.2Z" fill="#e9b565"/>
<g shape-rendering="crispEdges"><rect x="26" y="203" width="1" height="11" fill="#8c8c8c"/><rect x="26" y="213" width="8" height="1" fill="#8c8c8c"/></g><g shape-rendering="crispEdges">
<rect x="35.5" y="205.5" width="15" height="14" fill="#e9eff1" stroke="#8f9799"/>
<rect x="35" y="205" width="16" height="3" fill="#50565a"/>
<rect x="45" y="206" width="1" height="1" fill="#fff"/>
<rect x="47" y="206" width="1" height="1" fill="#fff"/>
<rect x="49" y="206" width="1" height="1" fill="#fff"/>
<rect x="37" y="209.5" width="2.5" height="1.2" fill="#8a8f92"/>
<rect x="41.5" y="209.5" width="2.5" height="1.2" fill="#8a8f92"/>
<rect x="46" y="209.5" width="2.5" height="1.2" fill="#8a8f92"/>
<rect x="37" y="213" width="2.5" height="1.2" fill="#222"/>
<rect x="41.5" y="213" width="2.5" height="1.2" fill="#222"/>
<rect x="37" y="216" width="2.5" height="1.2" fill="#222"/>
</g>
<path d="M41.2 214.4Q46 212 50.8 214.4V219.2Q46 221.8 41.2 219.2Z" fill="#efb65f"/>
<path d="M41.2 216Q46 217.4 50.8 216" fill="none" stroke="#d9a04e" stroke-width="0.7"/></svg>
<div class="a" style="left:0px;top:0px;width:668px;height:1px;background:#3d5a5e;"></div>
<div class="a" style="left:0px;top:0px;width:1px;height:505px;background:#3d5a5e;"></div>
<div class="a" style="left:667px;top:0px;width:1px;height:505px;background:#3d5a5e;"></div>
<div class="a" style="left:0px;top:503px;width:668px;height:2px;background:#3d5a5e;"></div>
</body></html>
